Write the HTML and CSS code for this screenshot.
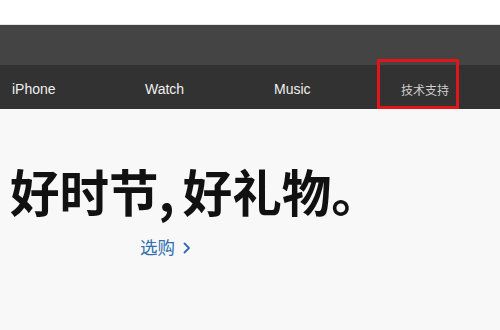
FILE: index.html
```html
<!DOCTYPE html>
<html lang="zh-CN">
<head>
<meta charset="utf-8">
<link rel="stylesheet" href="styles.css">
</head>
<body>
<div class="page">
  <div class="topgap"></div>
  <div class="bar"></div>
  <nav class="nav">
    <a class="nav-item">iPhone</a>
    <a class="nav-item">Watch</a>
    <a class="nav-item">Music</a>
    <a class="nav-item nav-cjk highlighted">技术支持</a>
  </nav>
  <main class="hero">
    <h1 class="headline">好时节, 好礼物。</h1>
    <a class="shop">选购<svg class="chev" width="8" height="12" viewBox="0 0 8 12"><polyline points="1.5,1.5 6,6 1.5,10.5" fill="none" stroke="currentColor" stroke-width="1.8" stroke-linecap="round" stroke-linejoin="round"/></svg></a>
  </main>
</div>
</body>
</html>
```
FILE: styles.css
```css
html, body {
  margin: 0;
  padding: 0;
}
body {
  width: 500px;
  height: 330px;
  overflow: hidden;
  background: #f8f8f8;
  font-family: "Liberation Sans", "Noto Sans CJK SC", sans-serif;
}
.page {
  display: flex;
  flex-direction: column;
  height: 330px;
}
.topgap {
  height: 25px;
  background: #ffffff;
  border-bottom: 1px solid #e4e4e4;
  box-sizing: border-box;
}
.bar {
  height: 40px;
  background: #444444;
}
.nav {
  height: 44px;
  box-sizing: border-box;
  padding-top: 4px;
  background: #323232;
  display: grid;
  grid-template-columns: 133px 129px 127px 1fr;
  align-items: center;
  padding-left: 12px;
}
.nav-item {
  color: #efefef;
  font-size: 14px;
  text-decoration: none;
  position: relative;
}
.nav-cjk {
  font-family: "Noto Sans CJK SC", sans-serif;
  font-size: 12px;
  color: #cfcfcf;
}
.highlighted::after {
  content: "";
  position: absolute;
  left: -24px;
  top: -22px;
  width: 76px;
  height: 44px;
  border: 3px solid #e0161b;
}
.hero {
  flex: 1;
  background: #f8f8f8;
  padding-top: 52px;
  padding-left: 10px;
}
.headline {
  margin: 0;
  font-family: "Noto Sans CJK SC", sans-serif;
  font-size: 49.5px;
  font-weight: 700;
  word-spacing: -3px;
  line-height: 60px;
  color: #111111;
}
.shop {
  display: inline-flex;
  align-items: center;
  margin-top: 14px;
  margin-left: 130px;
  font-family: "Noto Sans CJK SC", sans-serif;
  font-size: 17.5px;
  line-height: 24px;
  color: #2f6fad;
  text-decoration: none;
}
.chev {
  margin-left: 8px;
  margin-top: 2px;
}
```
